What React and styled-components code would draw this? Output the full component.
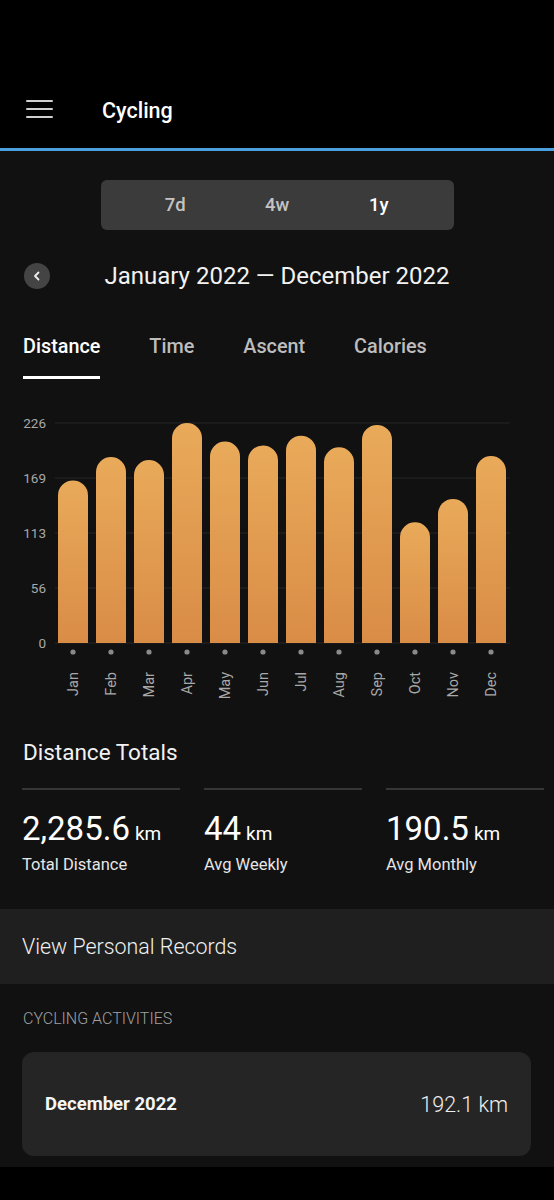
import React, { useState } from 'react'
import styled, { createGlobalStyle } from 'styled-components'

const Global = createGlobalStyle`
  html, body { margin: 0; padding: 0; background: #000; }
  body { font-family: Roboto, "Noto Sans", "Liberation Sans", sans-serif; color: #fff; }
`

const months = [
  ['Jan', 167], ['Feb', 191], ['Mar', 188], ['Apr', 226], ['May', 207], ['Jun', 203],
  ['Jul', 213], ['Aug', 201], ['Sep', 224], ['Oct', 124], ['Nov', 148], ['Dec', 192.1],
]
const ticks = [226, 169, 113, 56, 0]

function Chart() {
  const base = 643, top = 423, max = 226
  return (
    <ChartSvg width="554" height="320" viewBox="0 380 554 320">
      <defs>
        <linearGradient id="barFill" x1="0" y1="0" x2="0" y2="1">
          <stop offset="0" stopColor="#e9aa5a" />
          <stop offset="1" stopColor="#d98c46" />
        </linearGradient>
      </defs>
      {ticks.map((t, i) => {
        const y = top + i * 55
        return (
          <g key={t}>
            <line x1="55" x2="510" y1={y} y2={y} stroke="#262626" strokeWidth="1" />
            <text x="46" y={y} textAnchor="end" dominantBaseline="central" fill="#a8a8a8" fontSize="13.5">{t}</text>
          </g>
        )
      })}
      {months.map(([m, v], i) => {
        const cx = 73 + i * 38
        const h = (v / max) * (base - top)
        const y = base - h
        const x = cx - 15
        return (
          <g key={m}>
            <path d={`M${x},${base} V${y + 15} A15,15 0 0 1 ${x + 30},${y + 15} V${base} Z`} fill="url(#barFill)" />
            <circle cx={cx} cy="652" r="2.6" fill="#8a8a8a" />
            <text x={cx} y="672" transform={`rotate(-90 ${cx} 672)`} textAnchor="end" dominantBaseline="central" fill="#a8a8a8" fontSize="14.5">{m}</text>
          </g>
        )
      })}
    </ChartSvg>
  )
}

export default function App() {
  const [range, setRange] = useState('1y')
  const [tab, setTab] = useState('Distance')
  return (
    <Page>
      <Global />
      <TopBar>
        <HeaderRow>
          <Menu aria-label="menu">
            <span /><span /><span />
          </Menu>
          <Title>Cycling</Title>
        </HeaderRow>
      </TopBar>
      <Main>
        <Segmented>
          {['7d', '4w', '1y'].map(r => (
            <Segment key={r} active={r === range} onClick={() => setRange(r)}>{r}</Segment>
          ))}
        </Segmented>
        <DateRow>
          <BackButton aria-label="previous">
            <svg width="12" height="12" viewBox="0 0 12 12">
              <path d="M7.5 2.5 L4 6 L7.5 9.5" fill="none" stroke="#eee" strokeWidth="1.8" strokeLinecap="round" strokeLinejoin="round" />
            </svg>
          </BackButton>
          <DateTitle>January 2022 — December 2022</DateTitle>
          <span />
        </DateRow>
        <Tabs>
          {['Distance', 'Time', 'Ascent', 'Calories'].map(t => (
            <Tab key={t} active={t === tab} onClick={() => setTab(t)}>{t}</Tab>
          ))}
        </Tabs>
        <Chart />
        <SectionTitle>Distance Totals</SectionTitle>
        <Stats>
          <Stat>
            <Value>2,285.6<Unit>km</Unit></Value>
            <StatLabel>Total Distance</StatLabel>
          </Stat>
          <Stat>
            <Value>44<Unit>km</Unit></Value>
            <StatLabel>Avg Weekly</StatLabel>
          </Stat>
          <Stat>
            <Value>190.5<Unit>km</Unit></Value>
            <StatLabel>Avg Monthly</StatLabel>
          </Stat>
        </Stats>
        <RecordsBand>View Personal Records</RecordsBand>
        <ListLabel>CYCLING ACTIVITIES</ListLabel>
        <ActivityCard>
          <CardTitle>December 2022</CardTitle>
          <CardValue>192.1 km</CardValue>
        </ActivityCard>
      </Main>
    </Page>
  )
}

const Page = styled.div`
  width: 554px;
  min-height: 1200px;
  background: #000;
`
const TopBar = styled.header`
  display: flex;
  align-items: flex-end;
  height: 129px;
  padding-bottom: 19px;
  background: #000;
  border-bottom: 3px solid #4a9fdd;
`
const HeaderRow = styled.div`
  display: flex;
  align-items: center;
  height: 40px;
  padding-left: 26px;
`
const Menu = styled.div`
  display: flex;
  flex-direction: column;
  gap: 5.5px;
  width: 27px;
  margin-right: 49px;
  span { display: block; height: 2.5px; background: #cfcfcf; border-radius: 1px; }
`
const Title = styled.h1`
  margin: 0;
  font-size: 21.5px;
  font-weight: 500;
  color: #fff;
  padding-top: 3px;
`
const Main = styled.main`
  background: #111111;
  padding-top: 29px;
  padding-bottom: 11px;
`
const Segmented = styled.div`
  width: 353px;
  height: 50px;
  margin: 0 auto;
  box-sizing: border-box;
  padding: 0 24px;
  display: flex;
  background: #3b3b3b;
  border-radius: 6px;
`
const Segment = styled.div`
  flex: 1;
  display: flex;
  align-items: center;
  justify-content: center;
  font-size: 18.5px;
  font-weight: 500;
  color: ${p => (p.active ? '#ffffff' : '#c4c4c4')};
  cursor: pointer;
`
const DateRow = styled.div`
  display: grid;
  grid-template-columns: 1fr auto 1fr;
  align-items: center;
  height: 40px;
  margin-top: 26px;
  padding: 0 24px;
`
const BackButton = styled.div`
  width: 26px;
  height: 26px;
  border-radius: 50%;
  background: #444;
  display: flex;
  align-items: center;
  justify-content: center;
`
const DateTitle = styled.div`
  font-size: 24px;
  font-weight: 400;
  color: #f2f2f2;
`
const Tabs = styled.nav`
  display: flex;
  gap: 49px;
  padding-left: 23px;
  margin-top: 39px;
`
const Tab = styled.div`
  font-size: 19.8px;
  line-height: 24px;
  font-weight: 500;
  padding-bottom: 17px;
  color: ${p => (p.active ? '#ffffff' : '#bdbdbd')};
  border-bottom: 3px solid ${p => (p.active ? '#ffffff' : 'transparent')};
  cursor: pointer;
`
const ChartSvg = styled.svg`
  display: block;
  margin-top: 1px;
  font-family: Roboto, "Noto Sans", sans-serif;
`
const SectionTitle = styled.h2`
  margin: 38px 0 0 23px;
  font-size: 22.5px;
  line-height: 28px;
  font-weight: 400;
  color: #f2f2f2;
`
const Stats = styled.div`
  display: grid;
  grid-template-columns: repeat(3, 158px);
  gap: 24px;
  padding-left: 22px;
  margin-top: 22px;
`
const Stat = styled.div`
  border-top: 2px solid #363636;
  padding-top: 19px;
`
const Value = styled.div`
  font-size: 33px;
  line-height: 40px;
  font-weight: 400;
  color: #fff;
  white-space: nowrap;
`
const Unit = styled.span`
  font-size: 19px;
  margin-left: 5px;
`
const StatLabel = styled.div`
  margin-top: 1px;
  font-size: 16.5px;
  line-height: 20px;
  color: #e6e6e6;
`
const RecordsBand = styled.div`
  margin-top: 34px;
  height: 75px;
  display: flex;
  align-items: center;
  padding-left: 22px;
  background: #1f1f1f;
  font-size: 21.4px;
  font-weight: 300;
  color: #f0f0f0;
`
const ListLabel = styled.div`
  margin: 25px 0 0 23px;
  font-size: 16px;
  line-height: 20px;
  font-weight: 300;
  color: #a0a0a0;
`
const ActivityCard = styled.div`
  margin: 23px 23px 0 22px;
  height: 104px;
  border-radius: 12px;
  background: #252525;
  display: flex;
  align-items: center;
  justify-content: space-between;
  padding: 0 23px;
`
const CardTitle = styled.div`
  font-size: 18.5px;
  font-weight: 700;
  color: #f5f5f5;
`
const CardValue = styled.div`
  font-size: 21.5px;
  font-weight: 300;
  color: #eeeeee;
`
